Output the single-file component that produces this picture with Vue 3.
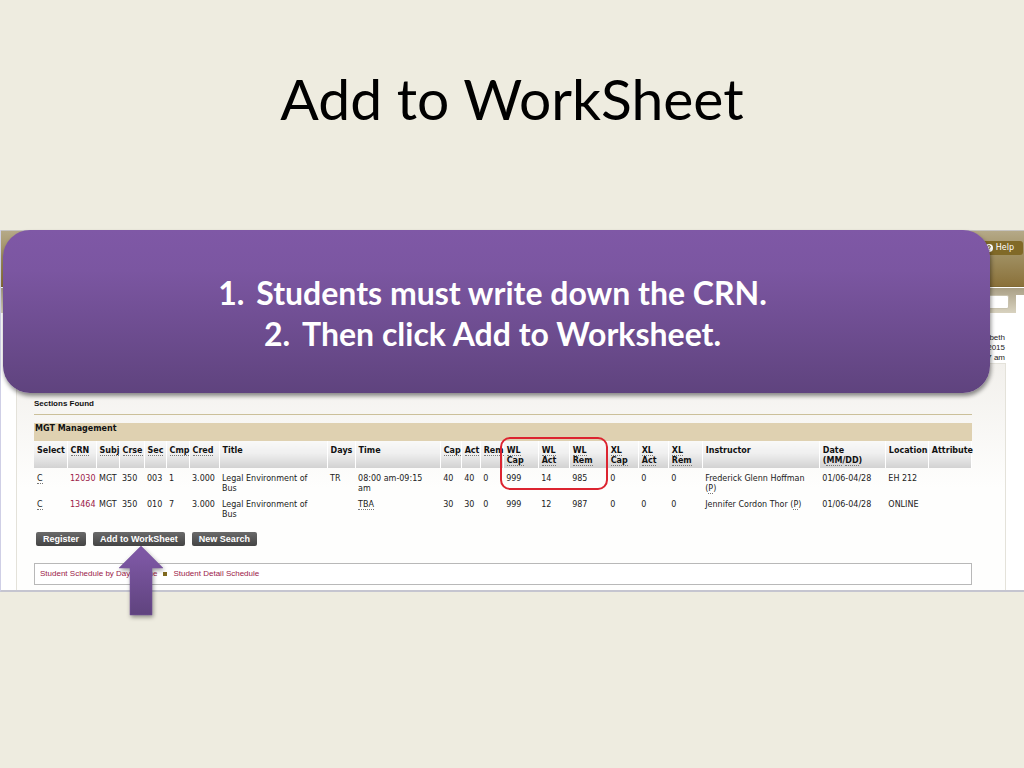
<script setup>
const columns = [
  { w: 33, lines: ['Select'] },
  { w: 29, lines: ['CRN'], abbr: true },
  { w: 23, lines: ['Subj'], abbr: true },
  { w: 25, lines: ['Crse'], abbr: true },
  { w: 22, lines: ['Sec'], abbr: true },
  { w: 23, lines: ['Cmp'], abbr: true },
  { w: 30, lines: ['Cred'], abbr: true },
  { w: 108, lines: ['Title'] },
  { w: 28, lines: ['Days'] },
  { w: 85, lines: ['Time'] },
  { w: 21, lines: ['Cap'], abbr: true },
  { w: 19, lines: ['Act'], abbr: true },
  { w: 23, lines: ['Rem'], abbr: true },
  { w: 35, lines: ['WL', 'Cap'], abbr: true },
  { w: 31, lines: ['WL', 'Act'], abbr: true },
  { w: 38, lines: ['WL', 'Rem'], abbr: true },
  { w: 31, lines: ['XL', 'Cap'], abbr: true },
  { w: 30, lines: ['XL', 'Act'], abbr: true },
  { w: 34, lines: ['XL', 'Rem'], abbr: true },
  { w: 117, lines: ['Instructor'] },
  { w: 66, lines: ['Date'], date: true },
  { w: 43, lines: ['Location'] },
  { w: 43, lines: ['Attribute'] },
]
const total = columns.reduce((sum, c) => sum + c.w, 0)

const rows = [
  { crn: '12030', before: ['MGT', '350', '003', '1', '3.000', 'Legal Environment of Bus', 'TR'], time: '08:00 am-09:15 am', after: ['40', '40', '0', '999', '14', '985', '0', '0', '0'], instructor: 'Frederick Glenn Hoffman', location: 'EH 212' },
  { crn: '13464', before: ['MGT', '350', '010', '7', '3.000', 'Legal Environment of Bus', ''], time: 'TBA', after: ['30', '30', '0', '999', '12', '987', '0', '0', '0'], instructor: 'Jennifer Cordon Thor', location: 'ONLINE' },
]
</script>

<template>
  <main class="slide">
    <h1>Add to WorkSheet</h1>

    <section class="capture">
      <header class="banner">
        <a class="help" href="#">
          <svg width="8" height="8" viewBox="0 0 8 8" aria-hidden="true">
            <circle cx="4" cy="4" r="4" fill="#fff" />
            <path d="M2.5 3Q2.7 1.6 4 1.6T5.4 3Q5.3 3.8 4 4.3V5M4 5.8V6.6" fill="none" stroke="#7d6626" />
          </svg>
          Help
        </a>
      </header>
      <div class="strip"><input type="text" aria-label="Search" /></div>
      <p class="user">Elizabeth<br />Winter 2015<br />11:07 am</p>

      <div class="panel">
        <h2>Sections Found</h2>
        <table>
          <caption>MGT Management</caption>
          <colgroup>
            <col v-for="(c, i) in columns" :key="i" :style="{ width: (c.w / total) * 100 + '%' }" />
          </colgroup>
          <thead>
            <tr>
              <th v-for="(c, i) in columns" :key="i" scope="col">
                <template v-for="(line, j) in c.lines" :key="j">
                  <br v-if="j" /><span :class="{ abbr: c.abbr }">{{ line }}</span>
                </template>
                <template v-if="c.date"><br />(<span class="abbr">MM</span>/<span class="abbr">DD</span>)</template>
              </th>
            </tr>
          </thead>
          <tbody>
            <tr v-for="row in rows" :key="row.crn">
              <td><span class="abbr">C</span></td>
              <td><a href="#">{{ row.crn }}</a></td>
              <td v-for="(v, i) in row.before" :key="i">{{ v }}</td>
              <td><span :class="{ abbr: row.time === 'TBA' }">{{ row.time }}</span></td>
              <td v-for="(v, i) in row.after" :key="'a' + i">{{ v }}</td>
              <td>{{ row.instructor }} (<span class="abbr">P</span>)</td>
              <td class="tight">01/06-04/28</td>
              <td>{{ row.location }}</td>
              <td></td>
            </tr>
          </tbody>
        </table>

        <div class="actions">
          <button type="button">Register</button>
          <button type="button">Add to WorkSheet</button>
          <button type="button">New Search</button>
        </div>

        <nav class="links">
          <a href="#">Student Schedule by Day &amp; Time</a>
          <i></i>
          <a href="#">Student Detail Schedule</a>
        </nav>
      </div>

      <div class="highlight"></div>
      <ol class="callout">
        <li><span>1.</span>Students must write down the CRN.</li>
        <li><span>2.</span>Then click Add to Worksheet.</li>
      </ol>
      <svg class="arrow" width="46" height="72" viewBox="0 0 46 72" aria-hidden="true">
        <defs>
          <linearGradient id="arrowFill" x1="0" y1="0" x2="0" y2="1">
            <stop offset="0" stop-color="#7f58a6" />
            <stop offset="0.2" stop-color="#7b56a1" />
            <stop offset="1" stop-color="#5f437e" />
          </linearGradient>
        </defs>
        <path d="M23 1L45 23H34V70H12V23H1Z" fill="url(#arrowFill)" stroke="#7955a0" stroke-width="0.5" />
      </svg>
    </section>
  </main>
</template>

<style>
body {
  margin: 0;
  background: #eeece0;
}
</style>

<style scoped>
.slide {
  min-height: 100vh;
  box-sizing: border-box;
  padding-top: 64px;
  background: #eeece0;
}
h1 {
  margin: 0 0 98px;
  font: 400 57px/68px Lato, sans-serif;
  text-align: center;
  color: #000;
}
.capture {
  position: relative;
  border-left: 1px solid #cfcfe6;
  border-bottom: 2px solid #c5c5d0;
  background: #fff;
  font: 8px/10px "DejaVu Sans", sans-serif;
  color: #222;
}
.banner {
  display: flex;
  justify-content: flex-end;
  align-items: flex-start;
  height: 57px;
  box-sizing: border-box;
  padding: 10px 1px 0 0;
  background: linear-gradient(#b5a988, #a39468 35%, #8a713a);
  border-top: 1px solid #c6c4c0;
  border-bottom: 1px solid #806a35;
}
.help {
  display: flex;
  align-items: center;
  gap: 3px;
  height: 14px;
  padding: 0 9px;
  border-radius: 3px;
  background: #806927;
  font: 8px/14px "DejaVu Sans", sans-serif;
  color: #fff;
  text-decoration: none;
}
.strip {
  display: flex;
  justify-content: flex-end;
  height: 26px;
  box-sizing: border-box;
  padding: 7px 15px 0;
  border-top: 1px solid #fff;
  background:
    linear-gradient(#fff, #fff) right 7px / 8px 100% no-repeat,
    linear-gradient(#aaa086, #d8d2bf);
}
.strip input {
  width: 180px;
  height: 14px;
  box-sizing: border-box;
  border: 1px solid #c8c2ae;
  border-radius: 2px;
  background: #fff;
}
.user {
  margin: 20px 19px 0 0;
  text-align: right;
  font: 8px/10px "Liberation Sans", sans-serif;
}
.panel {
  margin: 0 18px 0 15px;
  padding: 35px 33px 5px 17px;
  border: 1px solid #e4e2da;
  border-bottom: 0;
  background: linear-gradient(#f2f0ec, #fefefd 55%);
}
h2 {
  margin: 0 0 8px;
  padding-bottom: 5px;
  border-bottom: 1px solid #cbc09a;
  font: 700 8px/10px "Liberation Sans", sans-serif;
  color: #111;
}
table {
  width: 100%;
  table-layout: fixed;
  border-collapse: collapse;
}
caption {
  height: 17px;
  padding: 1px 0 0 1px;
  background: #dfd1b1;
  text-align: left;
  font: 700 8px/10px "DejaVu Sans", sans-serif;
  color: #111;
}
th,
td {
  padding: 5px 0 0 3px;
  text-align: left;
  vertical-align: top;
}
th {
  height: 22px;
  border-right: 1px solid #fff;
  background: linear-gradient(#f9f9f8, #efefef 45%, #d2d2d2);
  font-weight: 700;
  color: #111;
  white-space: nowrap;
}
td {
  height: 20px;
  padding: 6px 8px 0 3px;
}
.tight {
  padding-right: 0;
  white-space: nowrap;
}
.abbr {
  border-bottom: 1px dotted #777;
}
a {
  color: #9b2048;
  text-decoration: none;
}
.actions {
  display: flex;
  gap: 7px;
  margin: 12px 2px 17px;
}
button {
  height: 14px;
  padding: 0 7px;
  border: 0;
  border-radius: 2px;
  background: linear-gradient(#6a6a6a, #444);
  font: 700 9px/14px "Liberation Sans", sans-serif;
  color: #fff;
}
.links {
  display: flex;
  align-items: center;
  gap: 6px;
  height: 20px;
  padding: 0 5px;
  border: 1px solid #b8b8b8;
  background: #fff;
  font: 8px/10px "Liberation Sans", sans-serif;
}
.links i {
  width: 4px;
  height: 4px;
  background: #806a20;
}
.highlight {
  position: absolute;
  top: 207px;
  left: 48.8%;
  width: 10.5%;
  height: 53px;
  box-sizing: border-box;
  border: 2px solid #dc2430;
  border-radius: 10px;
}
.callout {
  position: absolute;
  top: 0;
  left: 2px;
  right: 34px;
  height: 163px;
  box-sizing: border-box;
  margin: 0;
  padding: 3px 8px 0 0;
  display: flex;
  flex-direction: column;
  justify-content: center;
  border-radius: 27px;
  background: linear-gradient(#7f58a6, #7b56a1 25%, #5f437e);
  box-shadow: 1px 3px 4px rgba(0, 0, 0, 0.45);
  font: 700 32px/41px Lato, sans-serif;
  color: #fff;
  text-align: center;
  list-style: none;
}
.callout span {
  margin-right: 12px;
}
.arrow {
  position: absolute;
  top: 315px;
  left: 117px;
  filter: drop-shadow(1px 2px 2px rgba(0, 0, 0, 0.4));
}
</style>
